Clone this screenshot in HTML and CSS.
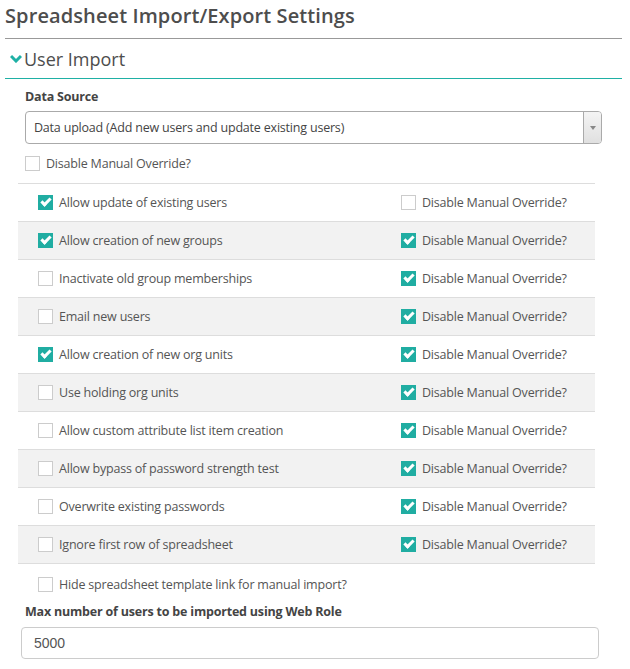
FILE: index.html
```html
<!DOCTYPE html>
<html lang="en">
<head>
  <meta charset="UTF-8" />
  <title>Spreadsheet Import/Export Settings</title>
  <link rel="stylesheet" href="styles.css">
</head>
<body>
  <div class="page">
    <h1 class="title">Spreadsheet Import/Export Settings</h1>
    <h2 class="section">
      <svg class="chev" width="12" height="9" viewBox="0 0 12 9"><path d="M1 2 L6 7 L11 2" fill="none" stroke="#1fb0a5" stroke-width="3"/></svg>
      User Import
    </h2>

    <div class="body">
      <div class="label">Data Source</div>
      <div class="select">
        <span class="select-text">Data upload (Add new users and update existing users)</span>
        <span class="select-btn"><span class="tri"></span></span>
      </div>
      <div class="check-line">
        <span class="cb"></span>Disable Manual Override?
      </div>

      <div class="rows">
        <div class="row">
          <div class="opt"><span class="cb on"></span>Allow update of existing users</div>
          <div class="opt right"><span class="cb"></span>Disable Manual Override?</div>
        </div>
        <div class="row">
          <div class="opt"><span class="cb on"></span>Allow creation of new groups</div>
          <div class="opt right"><span class="cb on"></span>Disable Manual Override?</div>
        </div>
        <div class="row">
          <div class="opt"><span class="cb"></span>Inactivate old group memberships</div>
          <div class="opt right"><span class="cb on"></span>Disable Manual Override?</div>
        </div>
        <div class="row">
          <div class="opt"><span class="cb"></span>Email new users</div>
          <div class="opt right"><span class="cb on"></span>Disable Manual Override?</div>
        </div>
        <div class="row">
          <div class="opt"><span class="cb on"></span>Allow creation of new org units</div>
          <div class="opt right"><span class="cb on"></span>Disable Manual Override?</div>
        </div>
        <div class="row">
          <div class="opt"><span class="cb"></span>Use holding org units</div>
          <div class="opt right"><span class="cb on"></span>Disable Manual Override?</div>
        </div>
        <div class="row">
          <div class="opt"><span class="cb"></span>Allow custom attribute list item creation</div>
          <div class="opt right"><span class="cb on"></span>Disable Manual Override?</div>
        </div>
        <div class="row">
          <div class="opt"><span class="cb"></span>Allow bypass of password strength test</div>
          <div class="opt right"><span class="cb on"></span>Disable Manual Override?</div>
        </div>
        <div class="row">
          <div class="opt"><span class="cb"></span>Overwrite existing passwords</div>
          <div class="opt right"><span class="cb on"></span>Disable Manual Override?</div>
        </div>
        <div class="row">
          <div class="opt"><span class="cb"></span>Ignore first row of spreadsheet</div>
          <div class="opt right"><span class="cb on"></span>Disable Manual Override?</div>
        </div>
      </div>

      <div class="check-line indent">
        <span class="cb"></span>Hide spreadsheet template link for manual import?
      </div>
      <div class="label">Max number of users to be imported using Web Role</div>
      <div class="input">5000</div>
    </div>
  </div>
</body>
</html>
```

FILE: styles.css
```css
body {
  margin: 0;
  font-family: "Open Sans", sans-serif;
  color: #555;
  background: #fff;
}
.page {
  padding: 0 8px 0 5px;
}
.title {
  margin: 0;
  padding-top: 1px;
  font-size: 20px;
  font-weight: 600;
  line-height: 30px;
  letter-spacing: 0.1px;
  color: #4d4d4d;
  border-bottom: 1px solid #999;
  padding-bottom: 7px;
}
.section {
  margin: 0;
  display: flex;
  align-items: center;
  font-size: 18px;
  font-weight: 400;
  color: #4d4d4d;
  height: 39px;
  border-bottom: 1px solid #1fb0a5;
}
.chev {
  margin: 0 2px 0 5px;
}
.body {
  padding: 0 20px 0 20px;
  font-size: 12.5px;
  letter-spacing: -0.2px;
}
.label {
  font-weight: 700;
  color: #444;
  margin-top: 9px;
  line-height: 18px;
}
.select {
  display: flex;
  margin-top: 5px;
  height: 31px;
  border: 1px solid #aaa;
  border-radius: 4px;
  color: #444;
  overflow: hidden;
}
.select-text {
  flex: 1;
  padding-left: 8px;
  line-height: 31px;
}
.select-btn {
  width: 17px;
  border-left: 1px solid #aaa;
  background: linear-gradient(#f4f4f4, #e0e0e0);
  display: flex;
  align-items: center;
  justify-content: center;
}
.tri {
  border-left: 3px solid transparent;
  border-right: 3px solid transparent;
  border-top: 4px solid #888;
}
.check-line {
  display: flex;
  align-items: center;
  height: 38px;
}
.check-line.indent {
  padding-left: 13px;
  padding-top: 10px;
  height: 20px;
}
.cb {
  width: 13px;
  height: 13px;
  border: 1px solid #ccc;
  background: #fff;
  margin-right: 6px;
  flex: none;
  position: relative;
}
.cb.on {
  width: 15px;
  height: 15px;
  border: none;
  background: #20ada2;
}
.cb.on::after {
  content: "";
  position: absolute;
  left: 3px;
  top: 3px;
  width: 7px;
  height: 3px;
  border-left: 3px solid #fff;
  border-bottom: 3px solid #fff;
  transform: rotate(-45deg);
}
.rows {
  margin-left: -7px;
  margin-right: 7px;
  border-top: 1px solid #ddd;
  margin-top: 1px;
}
.row {
  display: flex;
  align-items: center;
  height: 37px;
  border-bottom: 1px solid #ddd;
  padding-left: 20px;
}
.row:nth-child(even) {
  background: #f2f2f2;
}
.opt {
  display: flex;
  align-items: center;
  width: 363px;
}
.opt.right {
  width: auto;
}
.input {
  margin-top: 6px;
  margin-left: -4px;
  margin-right: 3px;
  height: 30px;
  border: 1px solid #ccc;
  border-radius: 4px;
  padding-left: 12px;
  line-height: 30px;
  font-family: "Liberation Sans", Arial, sans-serif;
  font-size: 14px;
  letter-spacing: 0;
  color: #555;
}
```
